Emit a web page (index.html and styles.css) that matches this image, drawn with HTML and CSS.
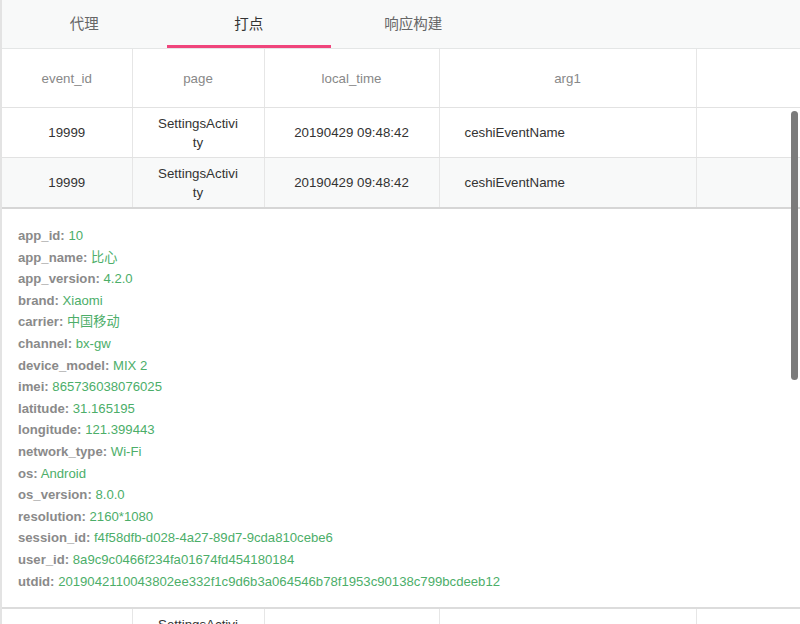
FILE: index.html
```html
<!DOCTYPE html>
<html lang="zh">
<head>
<meta charset="utf-8">
<link rel="stylesheet" href="styles.css">
</head>
<body>
<div class="page">
  <div class="tabs">
    <div class="tab">代理</div>
    <div class="tab active">打点</div>
    <div class="tab">响应构建</div>
  </div>
  <table class="grid">
    <colgroup>
      <col class="c1"><col class="c2"><col class="c3"><col class="c4"><col class="c5">
    </colgroup>
    <thead>
      <tr><th>event_id</th><th>page</th><th>local_time</th><th>arg1</th><th></th></tr>
    </thead>
    <tbody>
      <tr>
        <td>19999</td><td class="wrap">SettingsActivity</td><td>20190429 09:48:42</td><td class="left">ceshiEventName</td><td></td>
      </tr>
      <tr class="open">
        <td>19999</td><td class="wrap">SettingsActivity</td><td>20190429 09:48:42</td><td class="left">ceshiEventName</td><td></td>
      </tr>
      <tr class="detail-row">
        <td colspan="5" class="detail">
          <div class="kv"><b>app_id:</b> <span>10</span></div>
          <div class="kv"><b>app_name:</b> <span>比心</span></div>
          <div class="kv"><b>app_version:</b> <span>4.2.0</span></div>
          <div class="kv"><b>brand:</b> <span>Xiaomi</span></div>
          <div class="kv"><b>carrier:</b> <span>中国移动</span></div>
          <div class="kv"><b>channel:</b> <span>bx-gw</span></div>
          <div class="kv"><b>device_model:</b> <span>MIX 2</span></div>
          <div class="kv"><b>imei:</b> <span>865736038076025</span></div>
          <div class="kv"><b>latitude:</b> <span>31.165195</span></div>
          <div class="kv"><b>longitude:</b> <span>121.399443</span></div>
          <div class="kv"><b>network_type:</b> <span>Wi-Fi</span></div>
          <div class="kv"><b>os:</b> <span>Android</span></div>
          <div class="kv"><b>os_version:</b> <span>8.0.0</span></div>
          <div class="kv"><b>resolution:</b> <span>2160*1080</span></div>
          <div class="kv"><b>session_id:</b> <span>f4f58dfb-d028-4a27-89d7-9cda810cebe6</span></div>
          <div class="kv"><b>user_id:</b> <span>8a9c9c0466f234fa01674fd454180184</span></div>
          <div class="kv"><b>utdid:</b> <span>2019042110043802ee332f1c9d6b3a064546b78f1953c90138c799bcdeeb12</span></div>
        </td>
      </tr>
      <tr class="after">
        <td class="top"></td><td class="wrap top">SettingsActivity</td><td class="top"></td><td class="top"></td><td class="top"></td>
      </tr>
    </tbody>
  </table>
  <div class="scrollbar"></div>
</div>
</body>
</html>
```

FILE: styles.css
```css
html, body {
  margin: 0;
  padding: 0;
  background: #fff;
  overflow: hidden;
}
body {
  width: 800px;
  height: 624px;
  font-family: "Liberation Sans", Arial, "Noto Sans CJK SC", sans-serif;
  color: #333;
}
.page {
  position: relative;
  height: 624px;
  border-left: 2px solid #e3e3e3;
  overflow: hidden;
}
.tabs {
  display: flex;
  height: 48px;
  background: #f8f9f9;
  border-bottom: 1px solid #e4e6e6;
}
.tab {
  width: 164.5px;
  display: flex;
  align-items: center;
  justify-content: center;
  font-size: 14.5px;
  color: #666;
  font-family: "Noto Sans CJK SC", sans-serif;
  box-sizing: border-box;
  border-bottom: 3px solid transparent;
}
.tab.active {
  color: #333;
  border-bottom-color: #f0457c;
}
.grid {
  border-collapse: collapse;
  table-layout: fixed;
  width: 798px;
  font-size: 13.3px;
}
.c1 { width: 130px; }
.c2 { width: 132px; }
.c3 { width: 175px; }
.c4 { width: 257px; }
.c5 { width: 104px; }
th, td {
  border-right: 1px solid #e6e6e6;
  border-bottom: 1px solid #e2e2e2;
  text-align: center;
  vertical-align: middle;
  padding: 0 25px;
  line-height: 19px;
}
th:last-child, td:last-child {
  border-right: none;
}
th {
  height: 58px;
  font-weight: normal;
  color: #888;
}
tbody tr td {
  height: 49px;
  padding-top: 0;
  padding-bottom: 0;
}
td.wrap {
  word-break: break-all;
}
td.left {
  text-align: left;
}
tbody tr td.top {
  vertical-align: top;
  padding-top: 6px;
}
tr.open td {
  background: #f8f9f9;
  border-bottom: 2px solid #d6d6d6;
}
td.detail {
  height: auto;
  text-align: left;
  padding: 16px 16px 15px 16px;
  font-size: 13.15px;
  border-right: none;
  border-bottom: 2px solid #dcdcdc;
}
.kv {
  line-height: 21.6px;
  white-space: nowrap;
}
.kv b {
  color: #8a8a8a;
  font-weight: bold;
}
.kv span {
  color: #4cae69;
}
.scrollbar {
  position: absolute;
  left: 789px;
  top: 111px;
  width: 7px;
  height: 269px;
  border-radius: 4px;
  background: #7b7b7b;
}
```
